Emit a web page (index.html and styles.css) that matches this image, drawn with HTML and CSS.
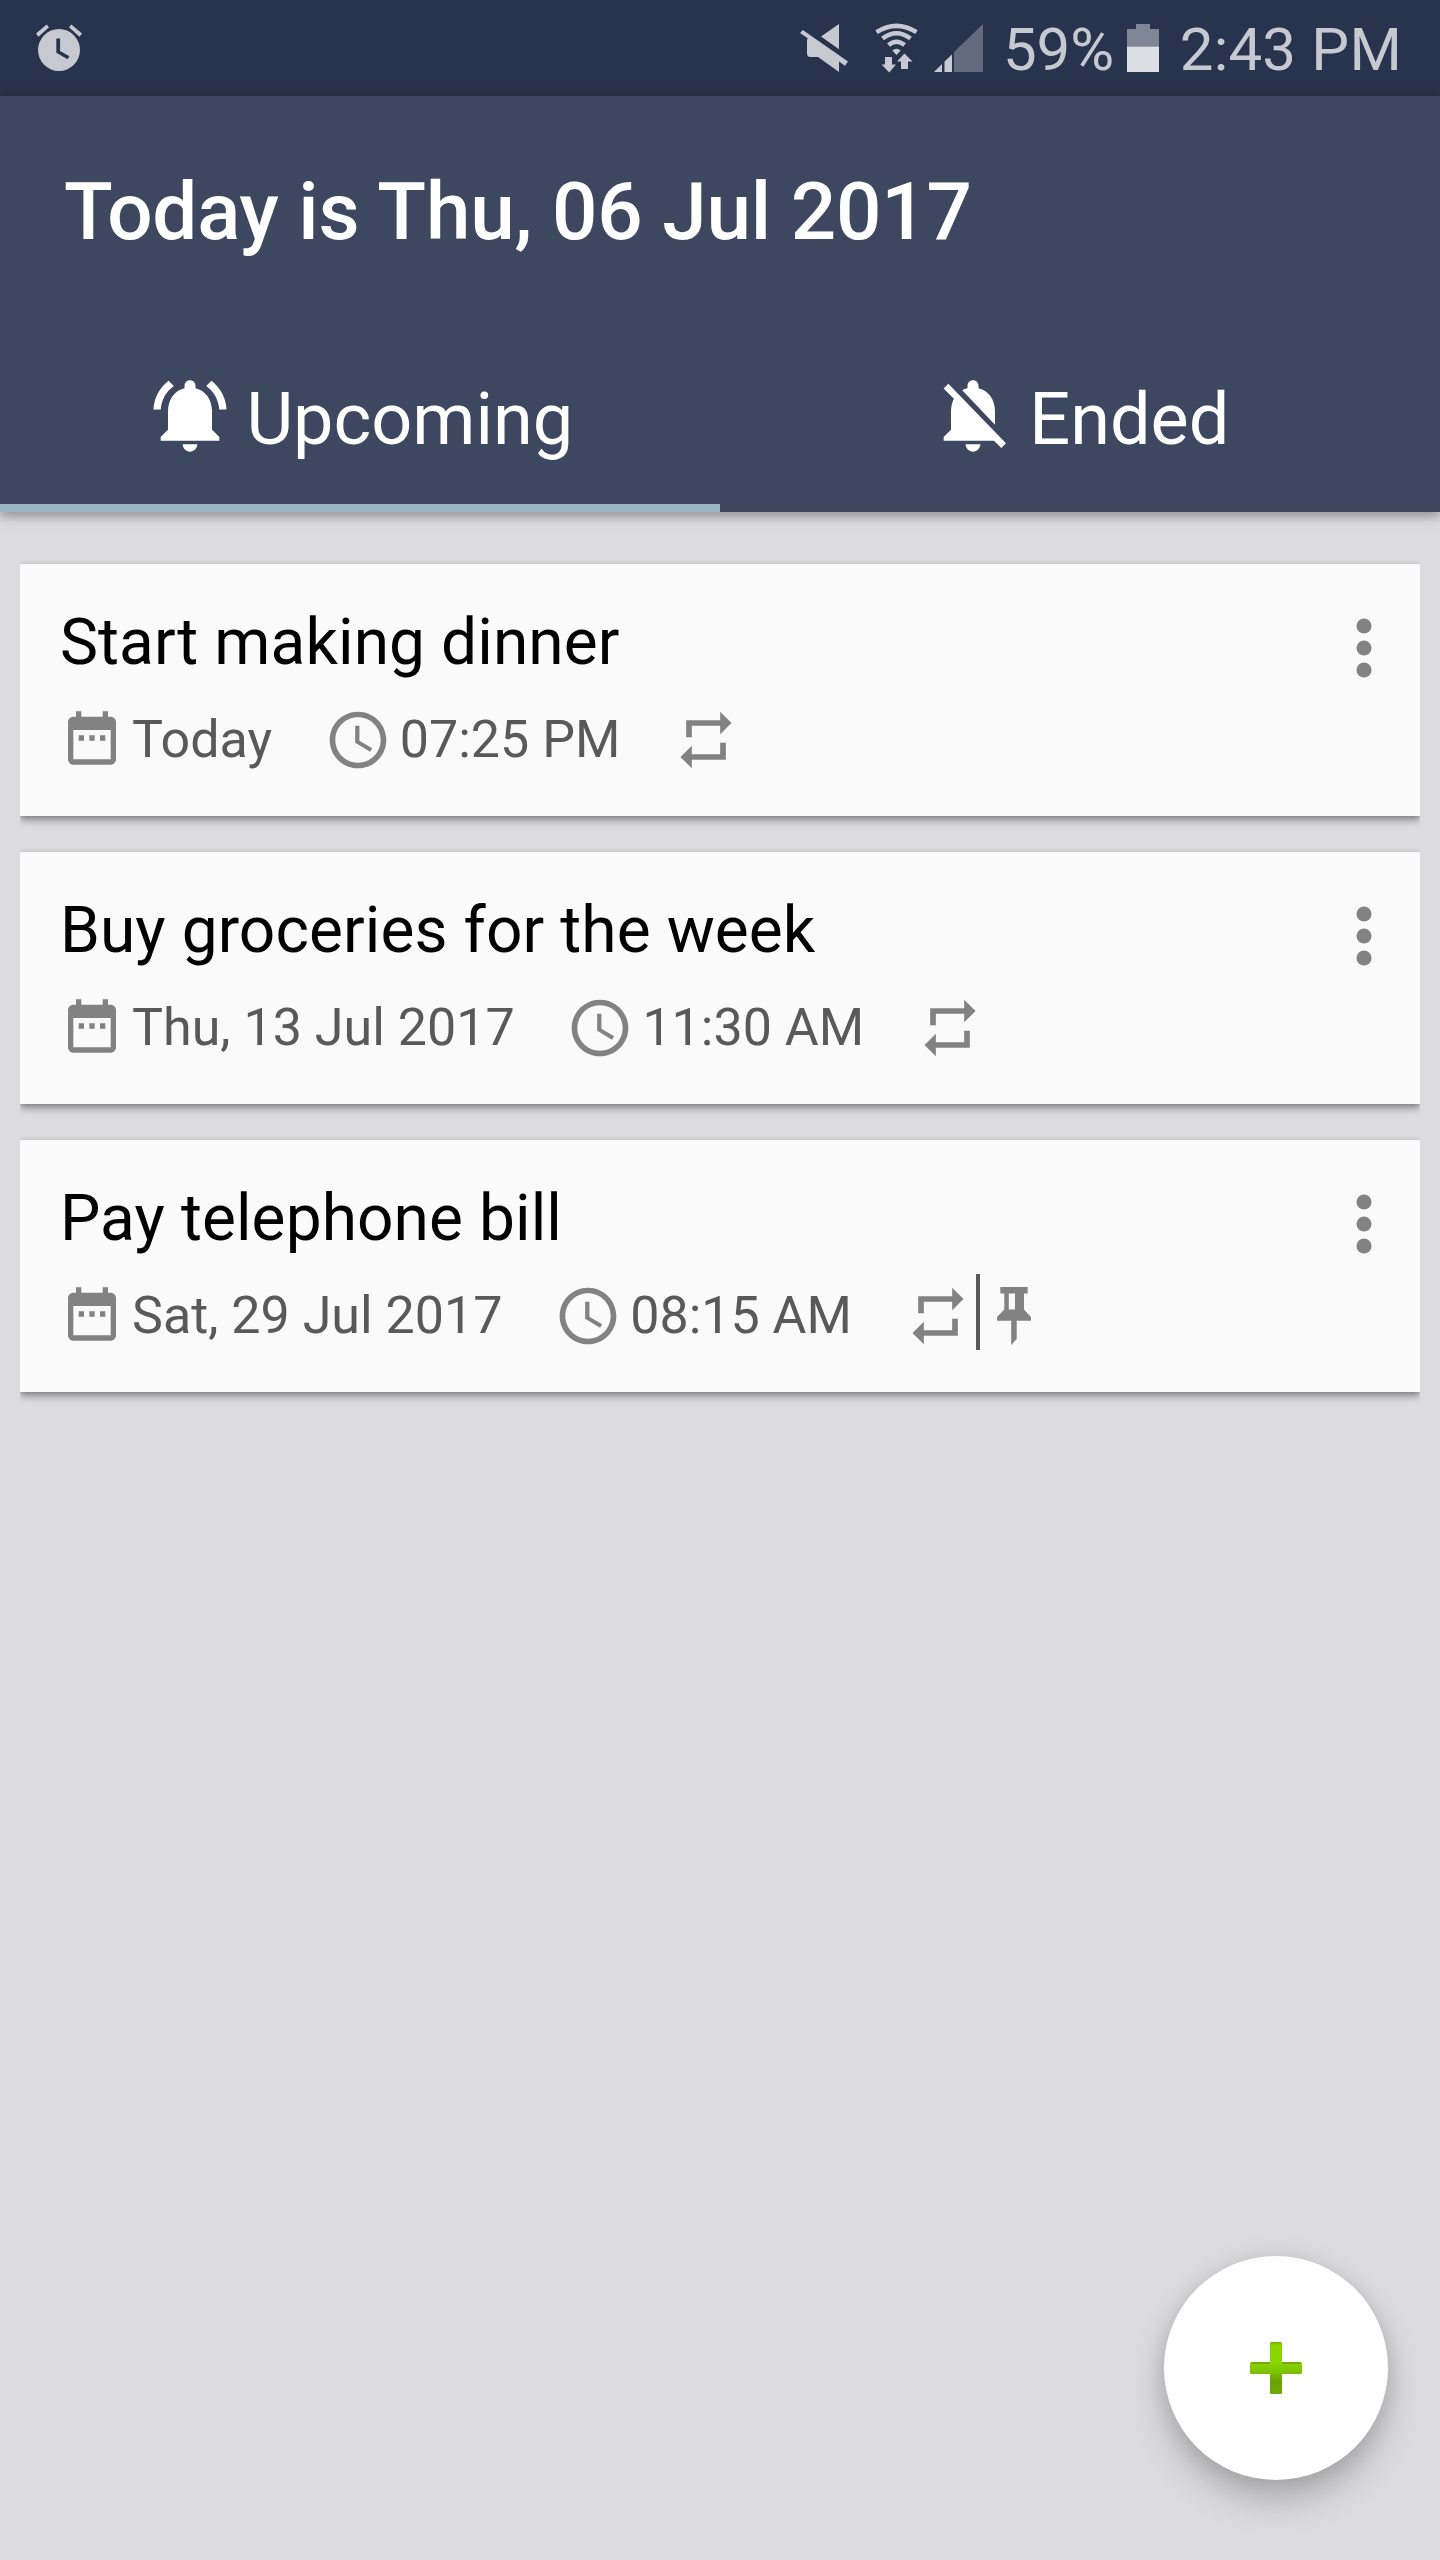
FILE: index.html
```html
<!DOCTYPE html>
<html lang="en">
<head>
<meta charset="utf-8">
<title>Reminders</title>
<link rel="stylesheet" href="styles.css">
</head>
<body>
<svg class="sprite" aria-hidden="true">
  <symbol id="date" viewBox="0 0 24 24"><path d="M9 11H7v2h2v-2zm4 0h-2v2h2v-2zm4 0h-2v2h2v-2zm2-7h-1V2h-2v2H8V2H6v2H5c-1.11 0-1.99.9-1.99 2L3 20c0 1.1.89 2 2 2h14c1.1 0 2-.9 2-2V6c0-1.1-.9-2-2-2zm0 16H5V9h14v11z"/></symbol>
  <symbol id="clock" viewBox="0 0 24 24"><path d="M11.99 2C6.47 2 2 6.48 2 12s4.47 10 9.99 10C17.52 22 22 17.52 22 12S17.52 2 11.99 2zM12 20c-4.42 0-8-3.58-8-8s3.58-8 8-8 8 3.58 8 8-3.58 8-8 8zM12.5 7H11v6l5.25 3.15.75-1.23-4.5-2.67z"/></symbol>
  <symbol id="repeat" viewBox="0 0 24 24"><path d="M7 7h10v3l4-4-4-4v3H5v6h2V7zm10 10H7v-3l-4 4 4 4v-3h12v-6h-2v4z"/></symbol>
  <symbol id="more" viewBox="0 0 16 60"><circle cx="8" cy="8" r="7.5"/><circle cx="8" cy="30" r="7.5"/><circle cx="8" cy="52" r="7.5"/></symbol>
</svg>

<div class="status">
  <svg class="status-alarm" width="46" height="48" viewBox="0 0 46 48">
    <path fill-rule="evenodd" d="M23 5a21 21 0 1 1 0 42 21 21 0 1 1 0-42zM20.3 14.5v14.2l11.3 6.5 1.8-3-9.3-5.3V14.5z"/>
    <path d="M0 9.5L10.7.5 13 3.3 2.5 12.700zM46 9.5L35.300.5 33 3.300l10.500 9.400z"/>
  </svg>
  <svg class="status-mute" width="48" height="48" viewBox="0 0 48 48">
    <path d="M21 12.500L39 0v25.200zM2.800 6L48 37.500 45 41.800 39 37.600V48L18 33H10.500Q7 33 7 29.500V16.500Q7 15.200 7.800 14.200L0 9z"/>
  </svg>
  <svg class="status-wifi" width="44" height="50" viewBox="0 0 44 50">
    <g fill="none" stroke="currentColor" stroke-width="4.500">
      <path d="M1.500 9.200Q21.500-3.500 41.500 9.200M7.500 15.500Q21.500 5 35.500 15.500M13.500 22Q21.500 15.500 29.500 22"/>
    </g>
    <path d="M17.300 27.500Q21.500 24 25.700 27.500L21.500 32zM10 34h7v7.500H21L14.200 49.500 6.500 41.500H10zM26 46h7v-7.500h4.500L29.500 30.500 22 38.500h4z"/>
  </svg>
  <svg class="status-signal" width="49" height="48" viewBox="0 0 49 48">
    <path d="M0 48L8 40v8zM10.500 37.500L18 30.500V48h-7.500z"/>
    <path opacity=".38" d="M20 28L49 0v48H20z"/>
  </svg>
  <span class="status-percent">59%</span>
  <svg class="status-battery" width="32" height="48" viewBox="0 0 32 48">
    <path fill="#7f8695" d="M9 0h14v5h9v17.500H0V5h9z"/>
    <path fill="#dddfe4" d="M0 22.500h32V48H0z"/>
  </svg>
  <span class="status-time">2:43 PM</span>
</div>

<header class="header">
  <h1 class="title">Today is Thu, 06 Jul 2017</h1>
  <nav class="tabs">
    <a class="tab tab-active">
      <svg class="tab-icon" viewBox="0 0 24 24"><path d="M7.580 4.080L6.150 2.650C3.750 4.480 2.170 7.300 2.030 10.500h2c.15-2.650 1.510-4.970 3.550-6.420zm12.390 6.420h2c-.15-3.200-1.730-6.020-4.120-7.850l-1.420 1.430c2.020 1.450 3.390 3.770 3.540 6.420zM18 11c0-3.070-1.640-5.640-4.500-6.320V4c0-.83-.67-1.500-1.500-1.500s-1.500.67-1.500 1.500v.68C7.630 5.360 6 7.920 6 11v5l-2 2v1h16v-1l-2-2v-5zM12 22c1.100 0 2-.9 2-2h-4c0 1.100.89 2 2 2z"/></svg>
      <span class="tab-label">Upcoming</span>
    </a>
    <a class="tab">
      <svg class="tab-icon" viewBox="0 0 24 24"><path d="M20 18.690L7.840 6.140 5.270 3.490 4 4.760l2.800 2.800v.01c-.52.99-.8 2.160-.8 3.420v5l-2 2v1h13.730l2 2L21 19.720l-1-1.030zM12 22c1.110 0 2-.89 2-2h-4c0 1.110.89 2 2 2zm6-7.320V11c0-3.080-1.640-5.640-4.500-6.320V4c0-.83-.67-1.500-1.500-1.500s-1.500.67-1.500 1.500v.68c-.15.03-.29.08-.42.12-.1.03-.2.07-.3.11h-.01c-.01 0-.01 0-.02.01-.23.09-.46.2-.68.31 0 0-.01 0-.01.01L18 14.680z"/></svg>
      <span class="tab-label">Ended</span>
    </a>
  </nav>
</header>

<main class="list">
  <article class="card">
    <div class="card-body">
      <h2 class="card-title">Start making dinner</h2>
      <div class="meta">
        <svg class="icon-date"><use href="#date"/></svg><span class="meta-text">Today</span>
        <svg class="icon"><use href="#clock"/></svg><span class="meta-text">07:25 PM</span>
        <svg class="icon"><use href="#repeat"/></svg>
      </div>
    </div>
    <svg class="more"><use href="#more"/></svg>
  </article>
  <article class="card">
    <div class="card-body">
      <h2 class="card-title">Buy groceries for the week</h2>
      <div class="meta">
        <svg class="icon-date"><use href="#date"/></svg><span class="meta-text">Thu, 13 Jul 2017</span>
        <svg class="icon"><use href="#clock"/></svg><span class="meta-text">11:30 AM</span>
        <svg class="icon"><use href="#repeat"/></svg>
      </div>
    </div>
    <svg class="more"><use href="#more"/></svg>
  </article>
  <article class="card">
    <div class="card-body">
      <h2 class="card-title">Pay telephone bill</h2>
      <div class="meta">
        <svg class="icon-date"><use href="#date"/></svg><span class="meta-text">Sat, 29 Jul 2017</span>
        <svg class="icon"><use href="#clock"/></svg><span class="meta-text">08:15 AM</span>
        <svg class="icon"><use href="#repeat"/></svg>
        <span class="divider"></span>
        <svg class="pin" viewBox="0 0 34 58"><path fill-rule="evenodd" d="M3.300 0h27.400v6.500H27v16L34 30v3.700H19.700V52L14.200 58V33.700H0V30l7.300-7.500v-16h-4zM11.800 6.500v16H18v-16z"/></svg>
      </div>
    </div>
    <svg class="more"><use href="#more"/></svg>
  </article>
</main>

<button class="fab" aria-label="Add">
  <svg width="54" height="54" viewBox="0 0 54 54">
    <defs>
      <linearGradient id="green" x1="0" y1="0" x2="0" y2="1">
        <stop offset="0" stop-color="#6fa800"/>
        <stop offset=".06" stop-color="#8ad600"/>
        <stop offset=".36" stop-color="#8ad800"/>
        <stop offset=".58" stop-color="#7cc200"/>
        <stop offset=".75" stop-color="#68a300"/>
        <stop offset="1" stop-color="#6bab00"/>
      </linearGradient>
    </defs>
    <path fill="url(#green)" d="M22.500 1h9q1.500 0 1.500 1.500V21h18.500q1.500 0 1.500 1.500v9q0 1.500-1.500 1.500H33v18.500q0 1.500-1.500 1.500h-9q-1.500 0-1.500-1.500V33H2.500Q1 33 1 31.500v-9Q1 21 2.500 21H21V2.500Q21 1 22.500 1z"/>
    <path stroke="#6b9f0c" stroke-width="1.500" d="M2.500 21.900H21M33 21.900h18.500"/>
  </svg>
</button>
</body>
</html>
```
FILE: styles.css
```css
* {
  box-sizing: border-box;
}

body {
  margin: 0;
  min-height: 2560px;
  background: #dcdcde;
  font-family: Roboto, "Liberation Sans", sans-serif;
}

svg {
  display: block;
  flex: none;
  fill: currentColor;
}

.sprite {
  display: none;
}

.status {
  display: flex;
  height: 96px;
  padding: 24px 38px 0 36px;
  background: #28334d;
  color: #c7c9d1;
  font-size: 60px;
  line-height: 70px;
  white-space: nowrap;
}

.status-mute {
  margin-left: auto;
}

.status-wifi {
  margin-left: 27px;
  margin-top: -1px;
}

.status-signal {
  margin-left: 15px;
}

.status-percent {
  margin: -9px 0 0 20px;
}

.status-battery {
  margin-left: 13px;
}

.status-time {
  margin: -9px 0 0 20.5px;
  letter-spacing: .2px;
}

.header {
  position: relative;
  height: 416px;
  padding-top: 69px;
  background: #3d4860;
  color: #fff;
  box-shadow: 0 3px 14px rgba(0, 0, 0, .22), 0 5px 8px rgba(0, 0, 0, .16);
}

.title {
  margin: 0;
  padding-left: 64px;
  font-size: 80px;
  font-weight: 500;
  letter-spacing: -.18px;
  line-height: 94px;
}

.tabs {
  display: flex;
  height: 186px;
  margin-top: 67px;
}

.tab {
  display: flex;
  flex: 1;
  justify-content: center;
  gap: 12px;
  padding: 45px 1px 0 0;
  border-bottom: 8px solid transparent;
  font-size: 72px;
}

.tab-active {
  padding-right: 0;
  border-bottom-color: #99b3c7;
}

.tab-label {
  line-height: 98px;
}

.tab-icon {
  width: 88px;
  height: 88px;
}

.list {
  display: flex;
  flex-direction: column;
  gap: 36px;
  padding: 52px 20px;
}

.card {
  display: flex;
  justify-content: space-between;
  height: 252px;
  padding: 40px 48px 0 40px;
  background: #fafafa;
  color: #828282;
  box-shadow: 0 2px 6px rgba(0, 0, 0, .3), 0 5px 8px rgba(0, 0, 0, .2);
  clip-path: inset(-16px 0);
}

.card-title {
  margin: 0;
  color: #000;
  font-size: 64px;
  font-weight: 400;
  letter-spacing: .09px;
  line-height: 78px;
}

.meta {
  display: flex;
  align-items: center;
  height: 68px;
  margin-top: 24px;
}

.meta-text {
  margin: 0 51.75px 0 8px;
  color: #595959;
  font-size: 52px;
  line-height: 68px;
  white-space: nowrap;
}

.icon-date {
  width: 64px;
  height: 64px;
  margin-bottom: 4px;
}

.icon {
  width: 68px;
  height: 68px;
}

.divider {
  width: 4px;
  height: 76px;
  margin: 0 17px 8px 4px;
  background: #595959;
}

.pin {
  width: 34px;
  height: 58px;
}

.more {
  width: 16px;
  height: 60px;
  margin-top: 14px;
}

.fab {
  position: fixed;
  right: 52px;
  bottom: 80px;
  display: flex;
  align-items: center;
  justify-content: center;
  width: 224px;
  height: 224px;
  padding: 0;
  border: 0;
  border-radius: 50%;
  background: #fff;
  box-shadow: 0 0 24px rgba(0, 0, 0, .1), 0 20px 34px rgba(0, 0, 0, .22);
}
```
